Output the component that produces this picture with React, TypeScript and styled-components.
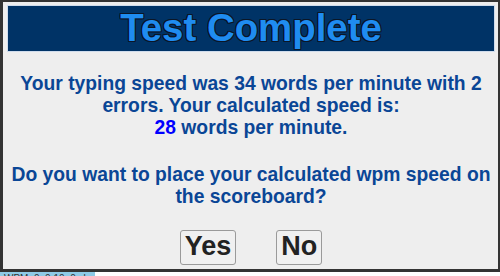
import React from "react";
import styled, { createGlobalStyle } from "styled-components";

const GlobalStyle = createGlobalStyle`
  html, body {
    margin: 0;
    padding: 0;
    background: #ffffff;
    overflow: hidden;
  }
  body {
    font-family: "Liberation Sans", Arial, sans-serif;
  }
`;

const Page = styled.div`
  display: flex;
  flex-direction: column;
  align-items: flex-start;
  width: 500px;
`;

const Dialog = styled.section`
  box-sizing: border-box;
  width: 500px;
  display: flex;
  flex-direction: column;
  background: #eeeeee;
  border-style: solid;
  border-color: #333333;
  border-width: 2px 2px 3px 3px;
  padding: 3px 3px 4px 4px;
  position: relative;
  z-index: 1;
`;

const Header = styled.h1`
  margin: 0;
  background: #003366;
  border: 1px solid #cfdcec;
  height: 45px;
  line-height: 44px;
  text-align: center;
  font-size: 38.4px;
  font-weight: bold;
  color: #1f8cf0;
  text-shadow: -1px -1px 0 #0b1626, 1px -1px 0 #0b1626, -1px 1px 0 #0b1626,
    1px 1px 0 #0b1626, 0 1px 0 #0b1626, 0 -1px 0 #0b1626, 1px 0 0 #0b1626,
    -1px 0 0 #0b1626;
`;

const Message = styled.p<{ $gap: number }>`
  margin: ${(p) => p.$gap}px 0 0;
  padding: 0 2px;
  text-align: center;
  white-space: nowrap;
  font-size: 19.3px;
  font-weight: bold;
  line-height: normal;
  color: #0a4696;
`;

const Highlight = styled.span`
  color: #0000ff;
`;

const ButtonRow = styled.div`
  display: flex;
  justify-content: center;
  gap: 40px;
  margin-top: 22px;
`;

const ChoiceButton = styled.button`
  box-sizing: border-box;
  height: 35px;
  margin: 0;
  padding: 0 4px 3px;
  line-height: 30px;
  font-family: "Liberation Sans", Arial, sans-serif;
  font-size: 27px;
  font-weight: bold;
  color: #222222;
  background: #f0f0f0;
  border: 1px solid #9a9a9a;
  border-radius: 3px;
  cursor: pointer;
`;

const StatusTag = styled.div`
  box-sizing: border-box;
  width: 95px;
  height: 14px;
  margin-top: -1px;
  padding: 2px 4px 0;
  background: #8ecae6;
  font-size: 10px;
  line-height: 12px;
  color: #333333;
  white-space: nowrap;
  overflow: hidden;
`;

export default function App() {
  return (
    <>
      <GlobalStyle />
      <Page>
        <Dialog>
          <Header>Test Complete</Header>
          <Message $gap={21}>
            Your typing speed was 34 words per minute with 2
            <br />
            errors. Your calculated speed is:
            <br />
            <Highlight>28</Highlight> words per minute.
          </Message>
          <Message $gap={25}>
            Do you want to place your calculated wpm speed on
            <br />
            the scoreboard?
          </Message>
          <ButtonRow>
            <ChoiceButton type="button">Yes</ChoiceButton>
            <ChoiceButton type="button">No</ChoiceButton>
          </ButtonRow>
        </Dialog>
        <StatusTag>WPM: 0 &nbsp;0:10 &nbsp;0 sk</StatusTag>
      </Page>
    </>
  );
}
